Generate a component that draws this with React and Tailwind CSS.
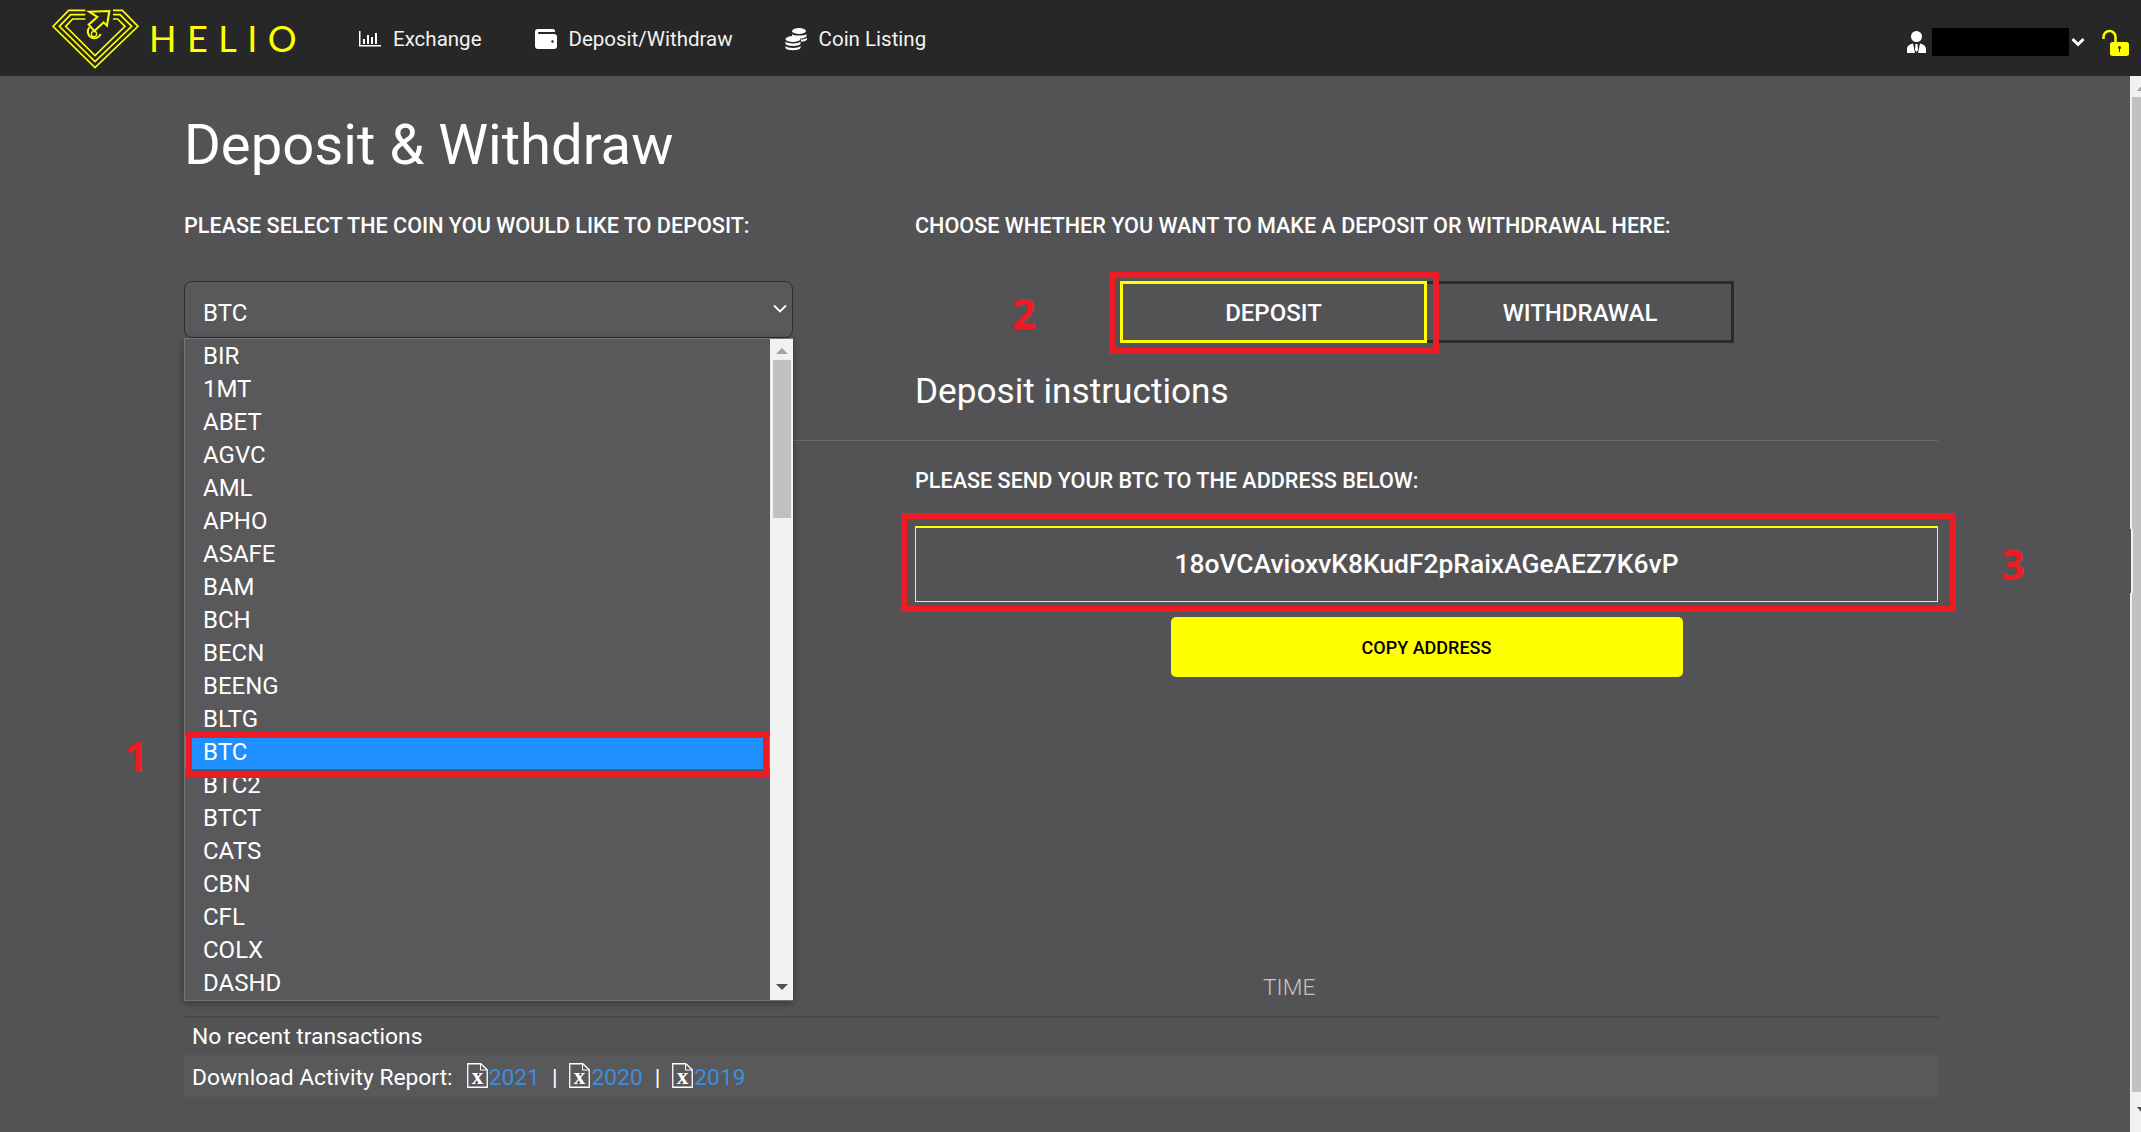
const coins = ['BIR','1MT','ABET','AGVC','AML','APHO','ASAFE','BAM','BCH','BECN','BEENG','BLTG','BTC','BTC2','BTCT','CATS','CBN','CFL','COLX','DASHD'];

function Logo() {
  return (
    <svg width="90" height="60" viewBox="0 0 270 180" fill="none" stroke="#ffff00" strokeWidth="5" className="shrink-0">
      <path d="M100 4H50L3 52L129 176L258 52L211 4H183" />
      <path d="M100 17H56L22 52L129 158L239 52L204 17H183" />
      <path d="M100 30H62L41 52L129 140L219 52L197 30H183" />
      <path d="M111 8L172 6L165 50L155 40L127 66L110 47L136 24L111 8Z" strokeWidth="6" />
      <path d="M112 55A20 20 0 1 0 146 75" strokeWidth="6" />
      <circle cx="126" cy="75" r="8" strokeWidth="4" />
    </svg>
  );
}

function ChartIcon() {
  return (
    <svg width="22" height="16" viewBox="0 0 22 16" fill="#fff" className="shrink-0">
      <path d="M0 0h1.500v14H22v1.500H0z" />
      <rect x="4" y="8" width="2" height="5" />
      <rect x="8" y="4" width="2" height="9" />
      <rect x="12" y="6" width="2" height="7" />
      <rect x="16" y="2" width="2" height="11" />
    </svg>
  );
}

function WalletIcon() {
  return (
    <svg width="22" height="20" viewBox="0 0 22 20" className="shrink-0">
      <path d="M3 0h15a2 2 0 0 1 2 2v1H4a1 1 0 0 0 0 2h15a3 3 0 0 1 3 3v9a3 3 0 0 1-3 3H3a3 3 0 0 1-3-3V3a3 3 0 0 1 3-3z" fill="#fff" />
      <circle cx="17.500" cy="12.500" r="1.200" fill="#272727" />
    </svg>
  );
}

function CoinsIcon() {
  return (
    <svg width="22" height="23" viewBox="0 0 22 23" fill="#fff" className="shrink-0">
      <ellipse cx="14" cy="3" rx="7" ry="3" />
      <path d="M7 6c1 2 13 2 14.500 0v2c-1 2-4 2.500-6 2.500C12 9 9 8 7 8z" />
      <ellipse cx="8" cy="11" rx="7.500" ry="3" />
      <path d="M16 11.500c2 0 5-.5 6-2v2c-1 1.500-3 2-6 2z" />
      <path d="M.5 13.500c1.500 2.500 13.500 2.500 15 0v2.500c-1.500 2.500-13.500 2.500-15 0z" />
      <path d="M.5 18c1.500 2.500 13.500 2.500 15 0v2c-1.500 3-13.500 3-15 0z" />
    </svg>
  );
}

function UserIcon() {
  return (
    <svg width="19" height="22" viewBox="0 0 19 22" className="shrink-0">
      <circle cx="9.500" cy="5.500" r="5.500" fill="#fff" />
      <path d="M0 22v-4c0-3 3-5 6-5.500L8 22zM19 22v-4c0-3-3-5-6-5.500L11 22z" fill="#fff" />
      <path d="M8.500 13h2l.5 6-1.500 2-1.500-2z" fill="#fff" />
    </svg>
  );
}

function LockIcon() {
  return (
    <svg width="27" height="27" viewBox="0 0 27 27" className="shrink-0">
      <path d="M1.500 10V8a6 6 0 0 1 12 0v6" fill="none" stroke="#ffff00" strokeWidth="2.500" />
      <rect x="8" y="13" width="19" height="14" rx="2.500" fill="#ffff00" />
      <circle cx="17.500" cy="18.500" r="1.500" fill="#272727" />
      <rect x="17" y="19" width="1" height="4" fill="#272727" />
    </svg>
  );
}

function FileIcon() {
  return (
    <svg width="21" height="25" viewBox="0 0 21 25" fill="none" className="shrink-0 mb-[7px]">
      <path d="M.75.75h13l6.500 6v17.500H.75z" stroke="#fff" strokeWidth="1.300" />
      <path d="M13.500 1v6h6.500" stroke="#fff" strokeWidth="1" />
      <text x="10.500" y="21" textAnchor="middle" fill="#fff" fontSize="23" fontWeight="700" fontFamily="'Liberation Serif', serif">x</text>
    </svg>
  );
}

function Report({ year, last }) {
  return (
    <>
      <FileIcon />
      <a className="text-[#3b8de0] ml-px">{year}</a>
      {!last && <span className="mx-[12px] text-white">|</span>}
    </>
  );
}

function Mark({ className }) {
  return <div className={`absolute border-[6px] border-[#ed1c24] pointer-events-none z-20 ${className}`} />;
}

function Num({ children, className }) {
  return <div className={`absolute z-20 text-[42px] leading-none font-bold text-[#ed1c24] font-['Open_Sans',sans-serif] ${className}`}>{children}</div>;
}

export default function App() {
  return (
    <div className="relative h-[1132px] overflow-hidden flex flex-col bg-[#535355] text-white font-['Roboto',sans-serif]">
      <header className="h-[76px] shrink-0 bg-[#272727] flex items-center">
        <div className="ml-[52px] mb-[-2px]"><Logo /></div>
        <div className="ml-[7px] w-[210px] text-[36px] leading-none tracking-[10.500px] text-[#ffff00] font-['Lato',sans-serif]">HELIO</div>
        <nav className="flex items-center pt-[2px] text-[20.500px] text-[#f2f2f2]">
          <a className="flex items-center gap-3"><ChartIcon />Exchange</a>
          <a className="flex items-center gap-3 ml-[53px]"><WalletIcon />Deposit/Withdraw</a>
          <a className="flex items-center gap-3 ml-[52px]"><CoinsIcon />Coin Listing</a>
        </nav>
        <div className="ml-auto mr-[12px] flex items-center mt-[8px]">
          <UserIcon />
          <div className="ml-[6px] w-[137px] h-[28px] bg-black" />
          <svg width="14" height="10" viewBox="0 0 14 10" fill="none" stroke="#fff" strokeWidth="3" className="ml-[2px] mr-[17px]"><path d="M1.500 2l5.500 5.500L12.500 2" /></svg>
          <LockIcon />
        </div>
      </header>

      <div className="flex-1 flex min-h-0">
        <main className="flex-1 min-w-0 pl-[184px] pr-[192px]">
          <h1 className="mt-[34px] h-[70px] text-[56.200px] leading-[70px] font-normal">Deposit &amp; Withdraw</h1>

          <div className="mt-[31px] flex">
            <div className="w-[609px] shrink-0">
              <div className="h-[30px] text-[21.600px] leading-[30px] font-medium whitespace-nowrap">PLEASE SELECT THE COIN YOU WOULD LIKE TO DEPOSIT:</div>
              <div className="relative mt-[40px]">
                <div className="h-[57px] rounded-lg border border-[#2f2f2f] bg-[#59595b] pl-[18px] pt-[6px] flex items-center text-[24px]">
                  BTC
                  <svg width="14" height="9" viewBox="0 0 14 9" fill="none" stroke="#fff" strokeWidth="1.800" className="ml-auto mr-[5px] mb-[8px]"><path d="M1 1.500l6 6 6-6" /></svg>
                </div>
                <div className="absolute top-full left-0 w-full h-[663px] pt-px z-10 flex bg-[#59595b] border-t border-l border-b border-[#737375] shadow-[0_2px_8px_rgba(0,0,0,0.35)]">
                  <ul className="flex-1 min-w-0">
                    {coins.map(c => (
                      <li key={c} className={`h-[33px] leading-[33px] pl-[18px] text-[24px] ${c === 'BTC' ? 'bg-[#1e90ff]' : ''}`}>{c}</li>
                    ))}
                  </ul>
                  <div className="w-[23px] shrink-0 bg-[#f1f1f1] flex flex-col items-center -mt-px">
                    <svg width="12" height="6" viewBox="0 0 12 6" className="mt-[9px] mb-[6px] shrink-0"><path d="M6 0l6 6H0z" fill="#a3a3a3" /></svg>
                    <div className="w-[18px] h-[158px] bg-[#c1c1c1]" />
                    <svg width="12" height="6" viewBox="0 0 12 6" className="mt-auto mb-[10px] shrink-0"><path d="M6 6l6-6H0z" fill="#505050" /></svg>
                  </div>
                </div>
              </div>
            </div>

            <div className="ml-[122px] flex-1 min-w-0">
              <div className="h-[30px] text-[21.600px] leading-[30px] font-medium whitespace-nowrap">CHOOSE WHETHER YOU WANT TO MAKE A DEPOSIT OR WITHDRAWAL HERE:</div>
              <div className="mt-[40px] ml-[205px] flex h-[62px]">
                <button className="w-[307px] pt-[2px] border-[3px] border-[#ffff00] text-[24px] font-medium">DEPOSIT</button>
                <button className="w-[307px] pt-[2px] pl-[2px] border-[3px] border-l-0 border-[#2b2b2b] text-[24px] font-medium">WITHDRAWAL</button>
              </div>
              <h2 className="mt-[23px] h-[50px] text-[35.200px] leading-[50px] font-normal">Deposit instructions</h2>
              <div className="mt-[24px] -ml-[122px] h-px bg-[#6a6a6c]" />
              <div className="mt-[25px] h-[30px] text-[21.600px] leading-[30px] font-medium whitespace-nowrap">PLEASE SEND YOUR BTC TO THE ADDRESS BELOW:</div>
              <div className="mt-[30px] h-[76px] border border-t-2 border-[#ffff00] flex items-center justify-center text-[26.400px] font-medium">18oVCAvioxvK8KudF2pRaixAGeAEZ7K6vP</div>
              <button className="block mt-[15px] mx-auto w-[512px] h-[60px] rounded-[5px] bg-[#ffff00] text-black text-[18px] font-medium">COPY ADDRESS</button>
            </div>
          </div>

          <div className="mt-[296px] h-[30px] pl-[1079px] text-[22.800px] leading-[30px] font-light text-[#c4c4c4]">TIME</div>
          <div className="mt-[13px] h-[2px] bg-[#48484a]" />
          <div className="h-[37px] leading-[37px] pl-2 text-[22.800px]">No recent transactions</div>
          <div className="h-[42px] bg-[#59595b] pl-2 pt-[5px] flex items-center text-[22.800px]">
            <span className="mr-[14px]">Download Activity Report:</span>
            <Report year="2021" />
            <Report year="2020" />
            <Report year="2019" last />
          </div>
        </main>

        <div className="relative w-[11px] shrink-0 bg-[#f1f1f1] flex flex-col overflow-hidden">
          <div className="h-[21px] shrink-0 pt-[9px] pl-[7px]"><svg width="10" height="6" viewBox="0 0 10 6" className="block"><path d="M5 0l5 6H0z" fill="#a3a3a3" /></svg></div>
          <div className="ml-[2px] h-[995px] bg-[#c1c1c1]" />
          <div className="pt-[15px] pl-[7px]"><svg width="10" height="6" viewBox="0 0 10 6" className="block"><path d="M5 6l5-6H0z" fill="#505050" /></svg></div>
          <div className="absolute left-0 top-[453px] w-px h-[64px] bg-[#535355]" />
          <div className="absolute left-px top-[453px] w-[2px] h-[64px] bg-[#f1f1f1]" />
        </div>
      </div>

      <Mark className="left-[186px] top-[732px] w-[583px] h-[46px]" />
      <Mark className="left-[1109px] top-[272px] w-[330px] h-[82px]" />
      <Mark className="left-[901px] top-[513px] w-[1055px] h-[99px]" />
      <Num className="left-[124px] top-[735px]">1</Num>
      <Num className="left-[1012px] top-[292px]">2</Num>
      <Num className="left-[2001px] top-[543px]">3</Num>
    </div>
  );
}
